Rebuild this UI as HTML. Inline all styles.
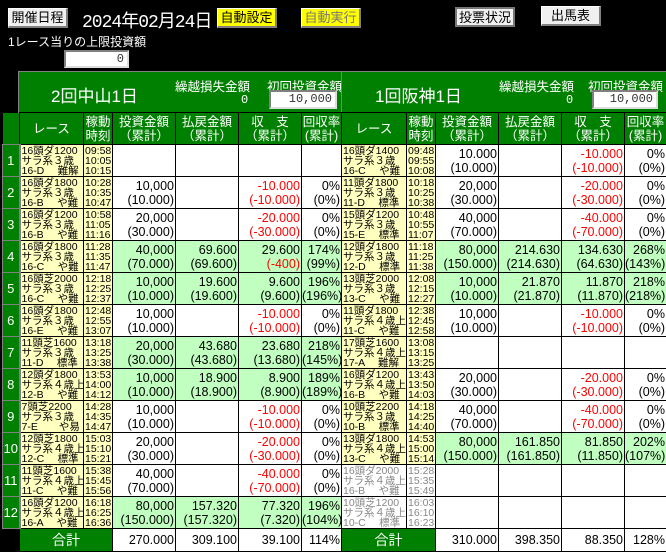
<!DOCTYPE html>
<html><head><meta charset="utf-8"><style>
*{margin:0;padding:0;box-sizing:border-box}
body{width:666px;height:551px;background:#000;overflow:hidden;position:relative;font-family:"Liberation Sans","Noto Sans CJK JP",sans-serif;color:#000}
.a{position:absolute;white-space:nowrap}
.btn{position:absolute;background:#f0f0f0;border:1px solid #fff;border-right:2px solid #808080;border-bottom:2px solid #808080;font-size:13px;text-align:center;line-height:17px}
.y{background:#ffff00}
.inp{position:absolute;background:#fff;border:2px solid #808080;border-right-color:#ddd;border-bottom-color:#ddd;font-family:"Liberation Mono",monospace;font-size:12px;text-align:right;padding-right:3px;line-height:14px;color:#333}
.hdr{position:absolute;background:#008000;color:#fff;border-left:1px solid #808080;border-top:1px solid #808080}
table{position:absolute;left:2px;top:112px;width:664px;border-collapse:collapse;table-layout:fixed}
td{border:1px solid #000;background:#fff;padding:0;vertical-align:middle;overflow:hidden;white-space:nowrap}
tr.h td{background:#008000;color:#fff;text-align:center;font-size:12.5px;line-height:14px;height:32px}
tr.d td{height:32px}
tr.t td{height:23px}
td.n{background:#008000;color:#fff;text-align:center;font-size:13px;border:1px solid #808080;border-right:2px solid #808080}
td.bk{background:#000;border:none}
td.r{background:#ffffc0;font-size:10.5px;line-height:10px;padding-left:1px}
td.tm{background:#ffffc0;font-size:10.5px;line-height:10px;padding-left:1px}
td.g{color:#888;background:#fff}
td.v{text-align:right;font-size:12.5px;line-height:14px;padding-right:1px}
tr.w td.v{background:#c0ffc0}
.red{color:#f00}
td.tot{background:#008000;color:#fff;text-align:center;font-size:14px}
</style></head><body>
<div class="btn" style="left:8px;top:8px;width:60px;height:20px">開催日程</div>
<div class="a" style="left:82px;top:7px;color:#fff;font-size:18px;font-family:'Liberation Mono','Noto Sans CJK JP',monospace;letter-spacing:-1px">2024年02月24日</div>
<div class="btn y" style="left:217px;top:8px;width:60px;height:20px">自動設定</div>
<div class="btn y" style="left:301px;top:8px;width:60px;height:20px;color:#777">自動実行</div>
<div class="btn" style="left:455px;top:7px;width:60px;height:20px;border:2px solid #777">投票状況</div>
<div class="btn" style="left:541px;top:6px;width:60px;height:20px">出馬表</div>
<div class="a" style="left:8px;top:33px;color:#fff;font-size:12px">1レース当りの上限投資額</div>
<div class="inp" style="left:64px;top:50px;width:65px;height:18px">0</div>

<div class="hdr" style="left:18px;top:71px;width:323px;height:42px">
<div class="a" style="left:32px;top:10px;font-size:17px">2回中山1日</div>
<div class="a" style="left:156px;top:4px;font-size:12.5px">繰越損失金額</div>
<div class="a" style="left:222px;top:21px;font-size:12px;font-family:'Liberation Mono',monospace">0</div>
<div class="a" style="left:248px;top:4px;font-size:12.5px">初回投資金額</div>
</div>
<div class="inp" style="left:269px;top:90px;width:68px;height:19px">10,000</div>
<div class="hdr" style="left:341px;top:71px;width:325px;height:42px">
<div class="a" style="left:33px;top:10px;font-size:17px">1回阪神1日</div>
<div class="a" style="left:157px;top:4px;font-size:12.5px">繰越損失金額</div>
<div class="a" style="left:224px;top:21px;font-size:12px;font-family:'Liberation Mono',monospace">0</div>
<div class="a" style="left:246px;top:4px;font-size:12.5px">初回投資金額</div>
</div>
<div class="inp" style="left:592px;top:90px;width:66px;height:19px">10,000</div>

<table>
<colgroup><col style="width:17px"><col style="width:64px"><col style="width:29px"><col style="width:63px"><col style="width:63px"><col style="width:63px"><col style="width:40px"><col style="width:65px"><col style="width:29px"><col style="width:63px"><col style="width:63px"><col style="width:63px"><col style="width:42px"></colgroup>
<tr class="h"><td class="bk"></td><td>レース</td><td>稼動<br>時刻</td><td>投資金額<br>（累計）</td><td>払戻金額<br>（累計）</td><td>収　支<br>（累計）</td><td>回収率<br>(累計)</td><td>レース</td><td>稼動<br>時刻</td><td>投資金額<br>（累計）</td><td>払戻金額<br>（累計）</td><td>収　支<br>（累計）</td><td>回収率<br>(累計)</td></tr>

<tr class="d"><td class="n">1</td><td class="r">16頭ダ1200<br>サラ系３歳<br>16-D　 難解</td><td class="tm">09:58<br>10:05<br>10:15</td><td class="v"></td><td class="v"></td><td class="v"></td><td class="v"></td>
<td class="r">16頭ダ1400<br>サラ系３歳<br>16-C　 や難</td><td class="tm">09:48<br>09:55<br>10:08</td><td class="v">10.000<br>(10.000)</td><td class="v"></td><td class="v red">-10.000<br>(-10.000)</td><td class="v">0%<br>(0%)</td></tr>

<tr class="d"><td class="n">2</td><td class="r">16頭ダ1800<br>サラ系３歳<br>16-B　 や難</td><td class="tm">10:28<br>10:35<br>10:47</td><td class="v">10,000<br>(10.000)</td><td class="v"></td><td class="v red">-10.000<br>(-10.000)</td><td class="v">0%<br>(0%)</td>
<td class="r">11頭ダ1800<br>サラ系３歳<br>11-D　 標準</td><td class="tm">10:18<br>10:25<br>10:38</td><td class="v">20,000<br>(30.000)</td><td class="v"></td><td class="v red">-20.000<br>(-30.000)</td><td class="v">0%<br>(0%)</td></tr>

<tr class="d"><td class="n">3</td><td class="r">16頭ダ1200<br>サラ系３歳<br>16-B　 や難</td><td class="tm">10:58<br>11:05<br>11:16</td><td class="v">20,000<br>(30.000)</td><td class="v"></td><td class="v red">-20.000<br>(-30.000)</td><td class="v">0%<br>(0%)</td>
<td class="r">15頭ダ1200<br>サラ系３歳<br>15-E　 標準</td><td class="tm">10:48<br>10:55<br>11:07</td><td class="v">40,000<br>(70.000)</td><td class="v"></td><td class="v red">-40.000<br>(-70.000)</td><td class="v">0%<br>(0%)</td></tr>

<tr class="d w"><td class="n">4</td><td class="r">16頭ダ1800<br>サラ系３歳<br>16-C　 や難</td><td class="tm">11:28<br>11:35<br>11:47</td><td class="v">40,000<br>(70.000)</td><td class="v">69.600<br>(69.600)</td><td class="v">29.600<br><span class="red">(-400)</span></td><td class="v">174%<br>(99%)</td>
<td class="r">12頭ダ1800<br>サラ系３歳<br>12-D　 標準</td><td class="tm">11:18<br>11:25<br>11:38</td><td class="v">80,000<br>(150.000)</td><td class="v">214.630<br>(214.630)</td><td class="v">134.630<br>(64.630)</td><td class="v">268%<br>(143%)</td></tr>

<tr class="d w"><td class="n">5</td><td class="r">16頭芝2000<br>サラ系３歳<br>16-C　 や難</td><td class="tm">12:18<br>12:25<br>12:37</td><td class="v">10,000<br>(10.000)</td><td class="v">19.600<br>(19.600)</td><td class="v">9.600<br>(9.600)</td><td class="v">196%<br>(196%)</td>
<td class="r">13頭芝2000<br>サラ系３歳<br>13-C　 や難</td><td class="tm">12:08<br>12:15<br>12:27</td><td class="v">10,000<br>(10.000)</td><td class="v">21.870<br>(21.870)</td><td class="v">11.870<br>(11.870)</td><td class="v">218%<br>(218%)</td></tr>

<tr class="d"><td class="n">6</td><td class="r">16頭ダ1800<br>サラ系３歳<br>16-E　 や難</td><td class="tm">12:48<br>12:55<br>13:07</td><td class="v">10,000<br>(10.000)</td><td class="v"></td><td class="v red">-10.000<br>(-10.000)</td><td class="v">0%<br>(0%)</td>
<td class="r">11頭ダ1800<br>サラ系４歳上<br>11-C　 や難</td><td class="tm">12:38<br>12:45<br>12:58</td><td class="v">10,000<br>(10.000)</td><td class="v"></td><td class="v red">-10.000<br>(-10.000)</td><td class="v">0%<br>(0%)</td></tr>

<tr class="d"><td class="n">7</td><td class="r">11頭芝1600<br>サラ系３歳<br>11-D　 標準</td><td class="tm">13:18<br>13:25<br>13:38</td><td class="v" style="background:#c0ffc0">20,000<br>(30.000)</td><td class="v" style="background:#c0ffc0">43.680<br>(43.680)</td><td class="v" style="background:#c0ffc0">23.680<br>(13.680)</td><td class="v" style="background:#c0ffc0">218%<br>(145%)</td>
<td class="r">17頭芝1600<br>サラ系４歳上<br>17-A　 難解</td><td class="tm">13:08<br>13:15<br>13:25</td><td class="v"></td><td class="v"></td><td class="v"></td><td class="v"></td></tr>

<tr class="d"><td class="n">8</td><td class="r">12頭ダ1800<br>サラ系４歳上<br>12-B　 や難</td><td class="tm">13:53<br>14:00<br>14:12</td><td class="v" style="background:#c0ffc0">10,000<br>(10.000)</td><td class="v" style="background:#c0ffc0">18.900<br>(18.900)</td><td class="v" style="background:#c0ffc0">8.900<br>(8.900)</td><td class="v" style="background:#c0ffc0">189%<br>(189%)</td>
<td class="r">16頭ダ1200<br>サラ系４歳上<br>16-B　 や難</td><td class="tm">13:43<br>13:50<br>14:03</td><td class="v">20,000<br>(30.000)</td><td class="v"></td><td class="v red">-20.000<br>(-30.000)</td><td class="v">0%<br>(0%)</td></tr>

<tr class="d"><td class="n">9</td><td class="r">7頭芝2200<br>サラ系３歳<br>7-E　　や易</td><td class="tm">14:28<br>14:35<br>14:47</td><td class="v">10,000<br>(10.000)</td><td class="v"></td><td class="v red">-10.000<br>(-10.000)</td><td class="v">0%<br>(0%)</td>
<td class="r">10頭芝2200<br>サラ系３歳<br>10-B　 標準</td><td class="tm">14:18<br>14:25<br>14:40</td><td class="v">40,000<br>(70.000)</td><td class="v"></td><td class="v red">-40.000<br>(-70.000)</td><td class="v">0%<br>(0%)</td></tr>

<tr class="d"><td class="n">10</td><td class="r">12頭芝1800<br>サラ系４歳上<br>12-C　 標準</td><td class="tm">15:03<br>15:10<br>15:21</td><td class="v">20,000<br>(30.000)</td><td class="v"></td><td class="v red">-20.000<br>(-30.000)</td><td class="v">0%<br>(0%)</td>
<td class="r">13頭ダ1800<br>サラ系４歳上<br>13-C　 や難</td><td class="tm">14:53<br>15:00<br>15:14</td><td class="v" style="background:#c0ffc0">80,000<br>(150.000)</td><td class="v" style="background:#c0ffc0">161.850<br>(161.850)</td><td class="v" style="background:#c0ffc0">81.850<br>(11.850)</td><td class="v" style="background:#c0ffc0">202%<br>(107%)</td></tr>

<tr class="d"><td class="n">11</td><td class="r">11頭芝1600<br>サラ系４歳上<br>11-C　 や難</td><td class="tm">15:38<br>15:45<br>15:56</td><td class="v">40,000<br>(70.000)</td><td class="v"></td><td class="v red">-40.000<br>(-70.000)</td><td class="v">0%<br>(0%)</td>
<td class="r g">16頭ダ2000<br>サラ系４歳上<br>16-B　 や難</td><td class="tm g">15:28<br>15:35<br>15:49</td><td class="v"></td><td class="v"></td><td class="v"></td><td class="v"></td></tr>

<tr class="d"><td class="n">12</td><td class="r">16頭ダ1200<br>サラ系４歳上<br>16-A　 や難</td><td class="tm">16:18<br>16:25<br>16:36</td><td class="v" style="background:#c0ffc0">80,000<br>(150.000)</td><td class="v" style="background:#c0ffc0">157.320<br>(157.320)</td><td class="v" style="background:#c0ffc0">77.320<br>(7.320)</td><td class="v" style="background:#c0ffc0">196%<br>(104%)</td>
<td class="r g">10頭芝1200<br>サラ系４歳上<br>10-C　 標準</td><td class="tm g">16:03<br>16:10<br>16:23</td><td class="v"></td><td class="v"></td><td class="v"></td><td class="v"></td></tr>

<tr class="t"><td class="bk"></td><td class="tot" colspan="2">合計</td><td class="v">270.000</td><td class="v">309.100</td><td class="v">39.100</td><td class="v">114%</td>
<td class="tot" colspan="2">合計</td><td class="v">310.000</td><td class="v">398.350</td><td class="v">88.350</td><td class="v">128%</td></tr>
</table>
</body></html>
